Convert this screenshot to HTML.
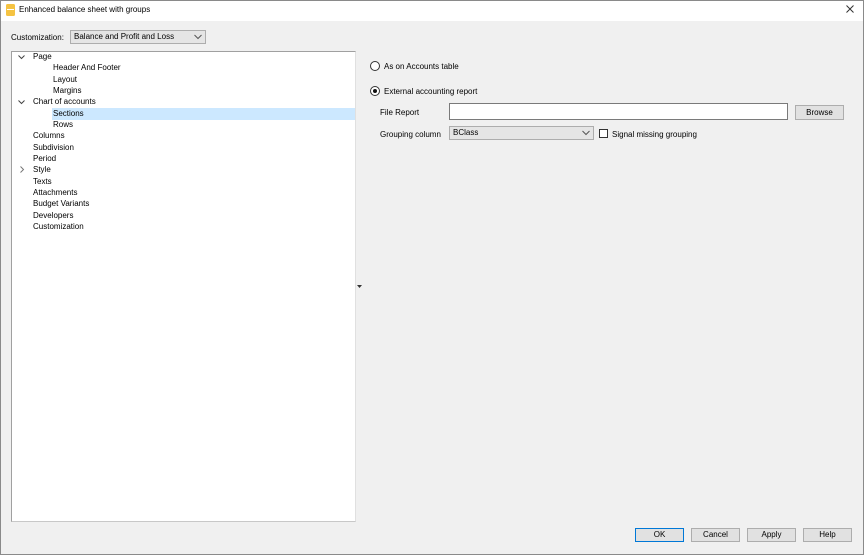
<!DOCTYPE html>
<html><head><style>
*{box-sizing:border-box;margin:0;padding:0}
body{width:864px;height:555px;overflow:hidden;font-family:"Liberation Sans",sans-serif;font-size:8px;color:#000;background:#f0f0f0;position:relative}
.frame{position:absolute;left:0;top:0;width:864px;height:555px;border:1px solid #8a8a8a;pointer-events:none;z-index:5}
.title{position:absolute;left:0;top:0;width:864px;height:21px;background:#fff}
.a{position:absolute;white-space:nowrap}
.tree{position:absolute;left:11px;top:51px;width:345px;height:471px;background:#fff;border:1px solid #a0a0a0;border-right-color:#e0e0e0;border-bottom-color:#c8c8c8}
.it{position:absolute;height:12px;line-height:12px;white-space:nowrap}
.btn{position:absolute;top:528px;width:49px;height:14px;background:#e1e1e1;border:1px solid #adadad;text-align:center;line-height:12px}
.combo{position:absolute;background:#e5e5e5;border:1px solid #adadad;height:14px;line-height:12px;padding-left:3px}
.chev{position:absolute;right:3px;top:2px}
</style></head><body>
<div class="frame"></div>
<div class="title">
 <svg class="a" style="left:6px;top:4px" width="9" height="12"><rect x="0" y="0" width="9" height="12" rx="1.5" fill="#f5c342"/><rect x="1" y="5" width="7" height="1" fill="#fff"/></svg>
 <div class="a" style="left:19px;top:5px">Enhanced balance sheet with groups</div>
 <svg class="a" style="left:846px;top:5px" width="8" height="8"><path d="M0.5 0.5L7.5 7.5M7.5 0.5L0.5 7.5" stroke="#333" stroke-width="1"/></svg>
</div>
<div class="a" style="left:11px;top:33px">Customization:</div>
<div class="combo" style="left:70px;top:30px;width:136px">Balance and Profit and Loss<svg class="chev" width="8" height="6" style="top:3px"><path d="M0.5 1L4 4.5L7.5 1" stroke="#555" fill="none"/></svg></div>
<div class="tree">
 <div class="it" style="left:40px;top:56px;width:303px;background:#cce8ff"></div>
 <svg class="a" style="left:6px;top:3px" width="7" height="5"><path d="M0.5 0.5L3.5 3.5L6.5 0.5" stroke="#444" fill="none"/></svg>
 <svg class="a" style="left:6px;top:48px" width="7" height="5"><path d="M0.5 0.5L3.5 3.5L6.5 0.5" stroke="#444" fill="none"/></svg>
 <svg class="a" style="left:8px;top:114px" width="5" height="7"><path d="M0.5 0.5L3.5 3.5L0.5 6.5" stroke="#777" fill="none"/></svg>
 <div class="it" style="left:21px;top:-1px">Page</div>
 <div class="it" style="left:41px;top:10px">Header And Footer</div>
 <div class="it" style="left:41px;top:22px">Layout</div>
 <div class="it" style="left:41px;top:33px">Margins</div>
 <div class="it" style="left:21px;top:44px">Chart of accounts</div>
 <div class="it" style="left:41px;top:56px">Sections</div>
 <div class="it" style="left:41px;top:67px">Rows</div>
 <div class="it" style="left:21px;top:78px">Columns</div>
 <div class="it" style="left:21px;top:90px">Subdivision</div>
 <div class="it" style="left:21px;top:101px">Period</div>
 <div class="it" style="left:21px;top:112px">Style</div>
 <div class="it" style="left:21px;top:124px">Texts</div>
 <div class="it" style="left:21px;top:135px">Attachments</div>
 <div class="it" style="left:21px;top:146px">Budget Variants</div>
 <div class="it" style="left:21px;top:158px">Developers</div>
 <div class="it" style="left:21px;top:169px">Customization</div>
</div>
<svg class="a" style="left:357px;top:285px" width="5" height="3"><path d="M0 0H5L2.5 3Z" fill="#333"/></svg>
<svg class="a" style="left:370px;top:61px" width="10" height="10"><circle cx="5" cy="5" r="4.5" fill="#fff" stroke="#333"/></svg>
<div class="a" style="left:384px;top:62px">As on Accounts table</div>
<svg class="a" style="left:370px;top:86px" width="10" height="10"><circle cx="5" cy="5" r="4.5" fill="#fff" stroke="#333"/><circle cx="5" cy="5" r="2" fill="#111"/></svg>
<div class="a" style="left:384px;top:87px">External accounting report</div>
<div class="a" style="left:380px;top:108px">File Report</div>
<div class="a" style="left:449px;top:103px;width:339px;height:17px;background:#fff;border:1px solid #7a7a7a"></div>
<div class="a" style="left:795px;top:105px;width:49px;height:15px;background:#e1e1e1;border:1px solid #adadad;text-align:center;line-height:13px">Browse</div>
<div class="a" style="left:380px;top:130px">Grouping column</div>
<div class="combo" style="left:449px;top:126px;width:145px">BClass<svg class="chev" width="8" height="6" style="top:3px"><path d="M0.5 1L4 4.5L7.5 1" stroke="#555" fill="none"/></svg></div>
<div class="a" style="left:599px;top:129px;width:9px;height:9px;background:#fff;border:1px solid #333"></div>
<div class="a" style="left:612px;top:130px">Signal missing grouping</div>
<div class="btn" style="left:635px;border:1px solid #0078d7">OK</div>
<div class="btn" style="left:691px">Cancel</div>
<div class="btn" style="left:747px">Apply</div>
<div class="btn" style="left:803px">Help</div>
</body></html>
